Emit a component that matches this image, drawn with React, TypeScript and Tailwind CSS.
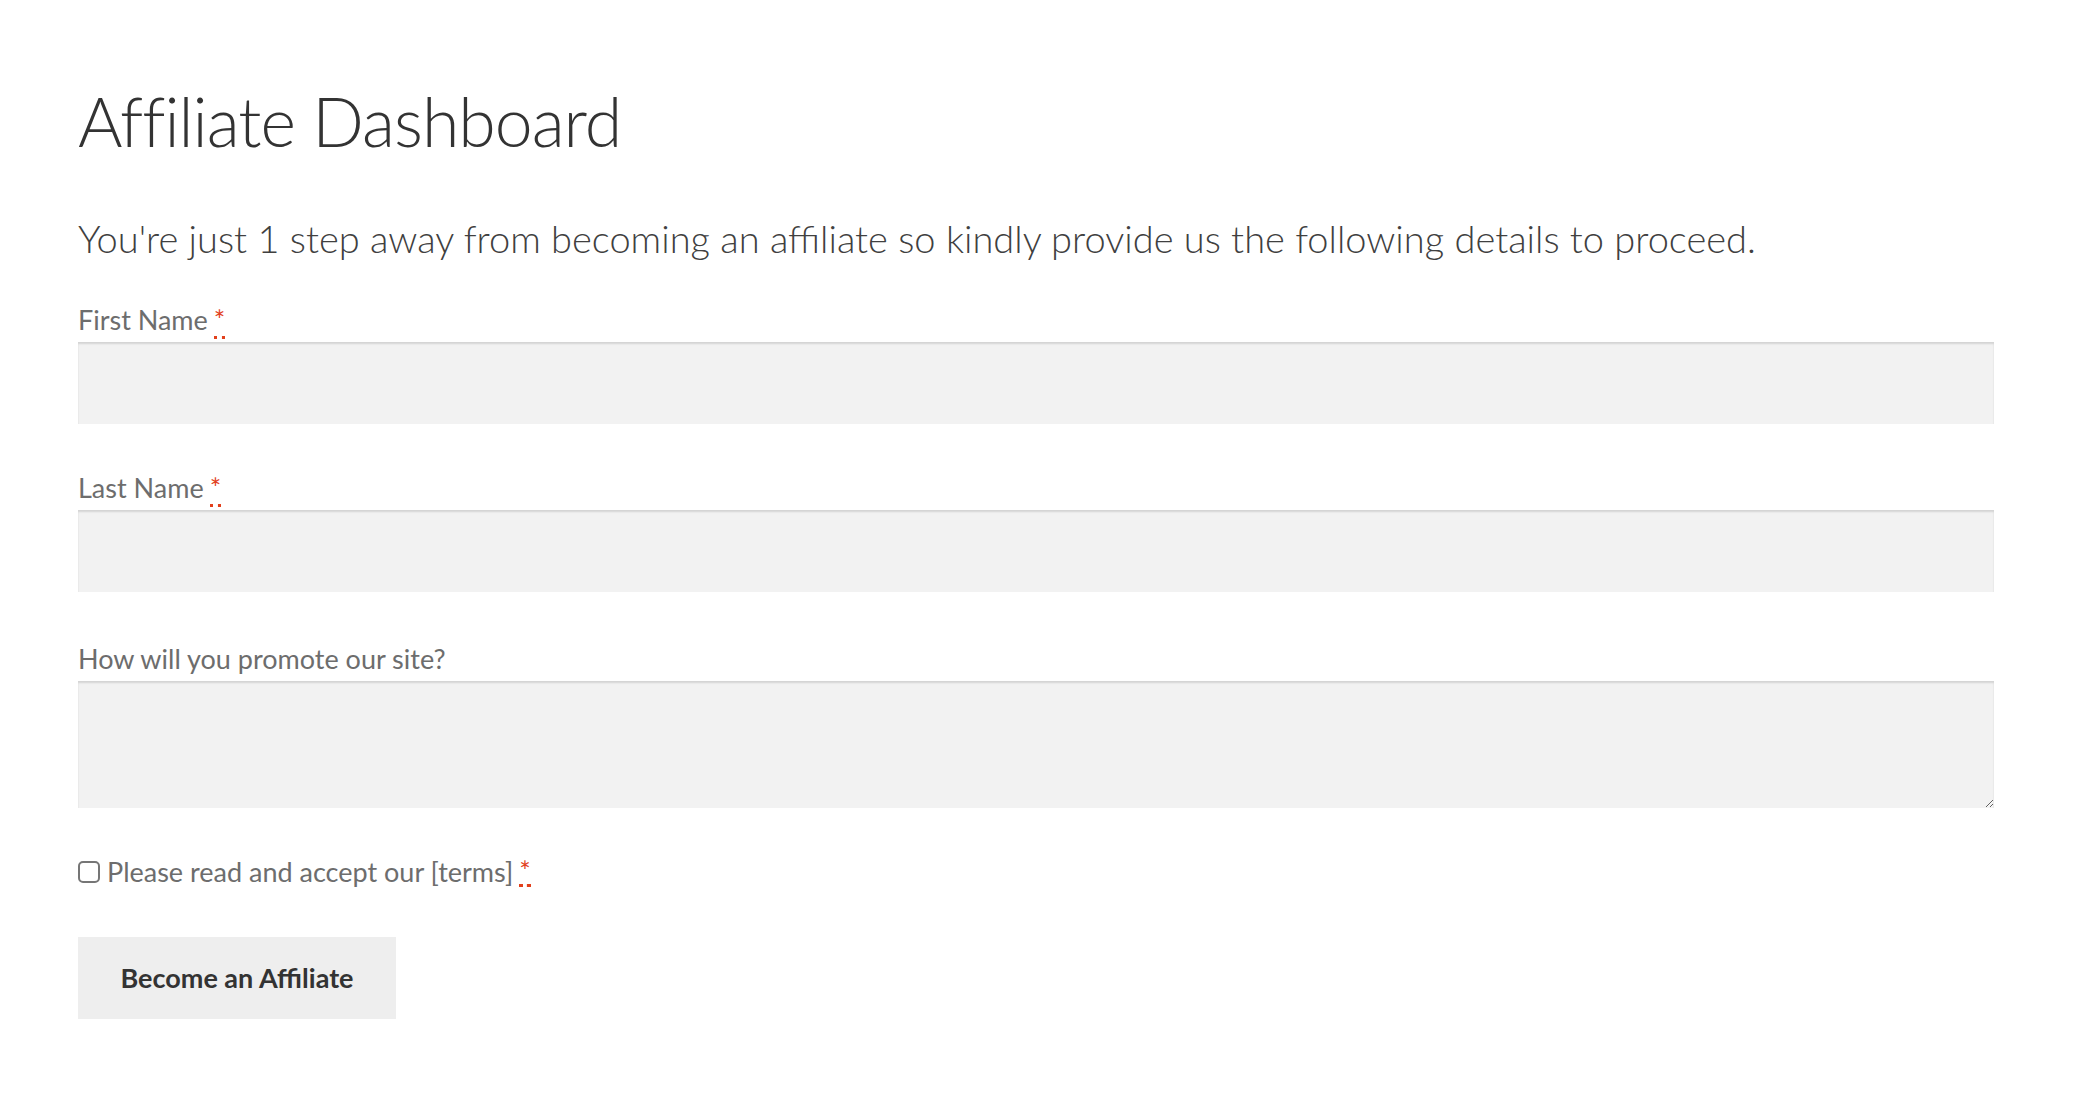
import React from "react";

function Req() {
  return (
    <abbr
      title="required"
      className="ml-[6px] text-[#e2401c] no-underline border-b-[3px] border-dotted border-[#e2401c] leading-none"
      style={{ textDecoration: "none" }}
    >
      *
    </abbr>
  );
}

export default function App() {
  return (
    <div className="min-h-[1098px] bg-white pl-[78px] pr-[92px] pt-[80px] text-[#333]" style={{ fontFamily: "Lato, 'Noto Sans', sans-serif" }}>
      <h1 className="text-[68px] font-light leading-[1.2] tracking-[-1px] text-[#333]">Affiliate Dashboard</h1>
      <p className="mt-[52px] text-[38px] font-light leading-[1.3] text-[#404040]">
        You're just 1 step away from becoming an affiliate so kindly provide us the following details to proceed.
      </p>
      <form className="mt-[37px] flex flex-col">
        <label className="text-[27px] leading-[40px] text-[#6d6d6d]">
          First Name<Req />
        </label>
        <input className="mt-[2px] h-[82px] w-full bg-[#f2f2f2] shadow-[inset_0_2px_2px_rgba(0,0,0,0.125)] outline-none" />
        <label className="mt-[44px] text-[27px] leading-[40px] text-[#6d6d6d]">
          Last Name<Req />
        </label>
        <input className="mt-[2px] h-[82px] w-full bg-[#f2f2f2] shadow-[inset_0_2px_2px_rgba(0,0,0,0.125)] outline-none" />
        <label className="mt-[47px] text-[27px] leading-[40px] text-[#6d6d6d]">How will you promote our site?</label>
        <textarea className="mt-[2px] block h-[127px] w-full bg-[#f2f2f2] shadow-[inset_0_2px_2px_rgba(0,0,0,0.125)] outline-none" />
        <label className="mt-[44px] flex items-center text-[27px] leading-[40px] text-[#6d6d6d]">
          <span className="mr-[7px] inline-block h-[22px] w-[22px] rounded-[5px] border-[2px] border-[#767676] bg-white" />
          Please read and accept our [terms]<Req />
        </label>
        <div className="mt-[45px]">
          <button type="button" className="h-[82px] w-[318px] bg-[#eeeeee] text-[27px] font-bold text-[#333]">
            Become an Affiliate
          </button>
        </div>
      </form>
    </div>
  );
}
